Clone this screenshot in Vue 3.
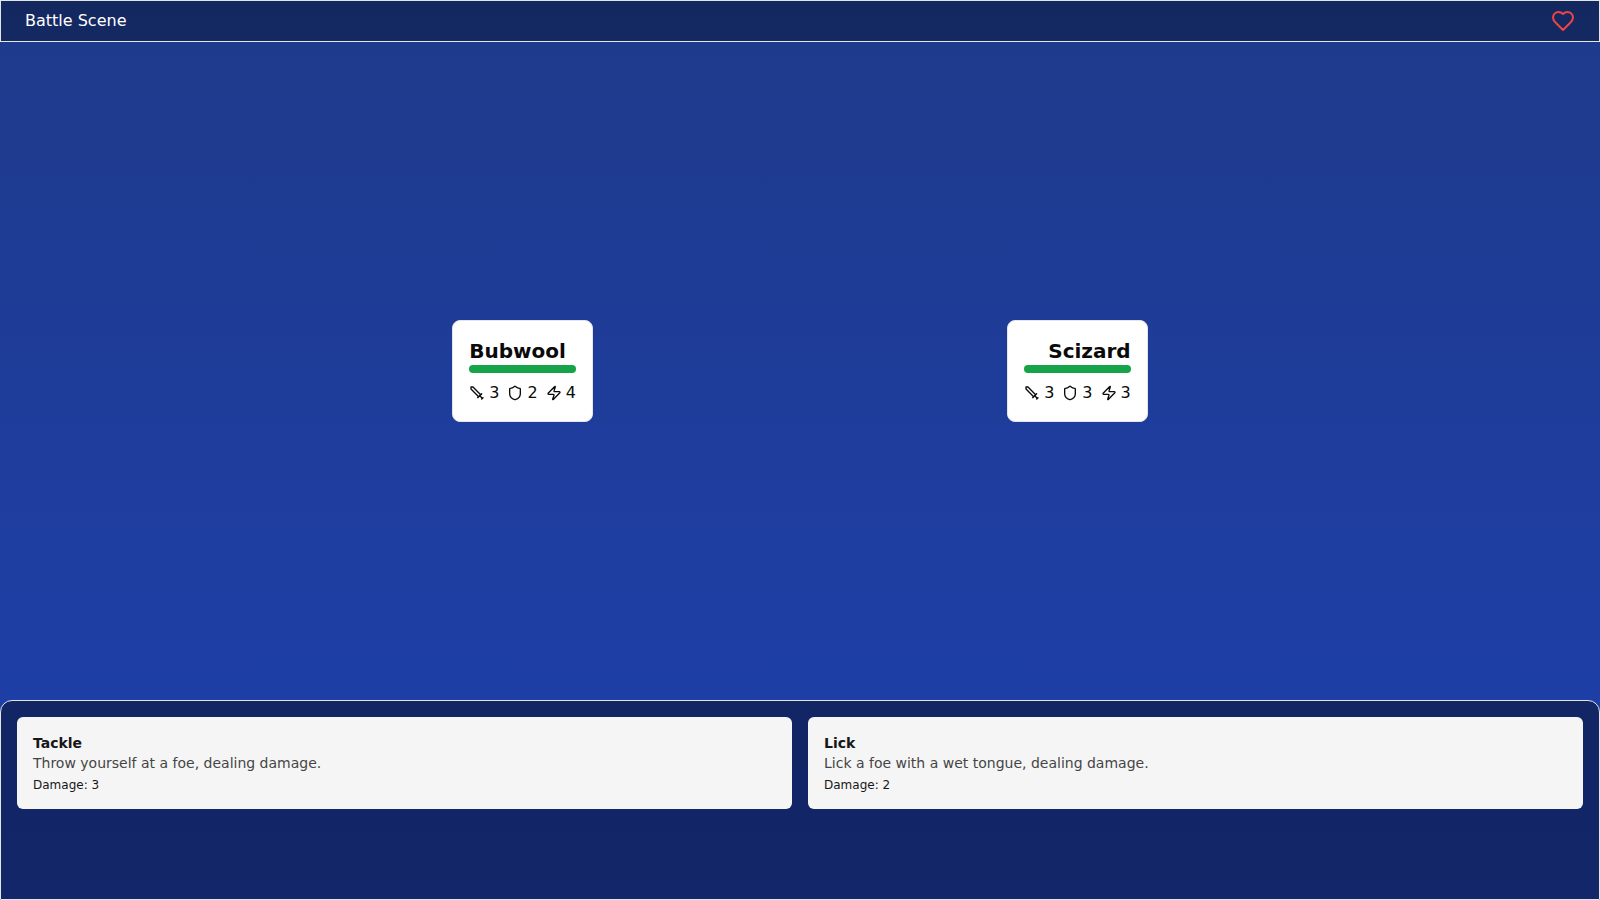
<script setup>
const creatures = [
  { name: 'Bubwool', side: 'player', hp: 100, attack: 3, defense: 2, speed: 4 },
  { name: 'Scizard', side: 'opponent', hp: 100, attack: 3, defense: 3, speed: 3 },
]

const skills = [
  { name: 'Tackle', description: 'Throw yourself at a foe, dealing damage.', damage: 3 },
  { name: 'Lick', description: 'Lick a foe with a wet tongue, dealing damage.', damage: 2 },
]
</script>

<template>
  <div class="scene">
    <header class="topbar">
      <span>Battle Scene</span>
      <svg class="heart" viewBox="0 0 24 24" aria-hidden="true">
        <path d="M19 14c1.49-1.46 3-3.21 3-5.5A5.5 5.5 0 0 0 16.5 3c-1.76 0-3 .5-4.5 2-1.5-1.5-2.74-2-4.5-2A5.5 5.5 0 0 0 2 8.5c0 2.3 1.5 4.05 3 5.5l7 7Z" />
      </svg>
    </header>

    <main class="arena">
      <section v-for="c in creatures" :key="c.name" class="creature" :class="c.side">
        <h2 class="name">{{ c.name }}</h2>
        <div class="health">
          <div class="health-fill" :style="{ width: c.hp + '%' }"></div>
        </div>
        <div class="stats">
          <span class="stat">
            <svg class="icon" viewBox="0 0 24 24" aria-hidden="true">
              <polyline points="14.5 17.5 3 6 3 3 6 3 17.5 14.5" />
              <line x1="13" x2="19" y1="19" y2="13" />
              <line x1="16" x2="20" y1="16" y2="20" />
              <line x1="19" x2="21" y1="21" y2="19" />
            </svg>
            <span>{{ c.attack }}</span>
          </span>
          <span class="stat">
            <svg class="icon" viewBox="0 0 24 24" aria-hidden="true">
              <path d="M20 13c0 5-3.5 7.5-7.66 8.95a1 1 0 0 1-.67-.01C7.5 20.5 4 18 4 13V6a1 1 0 0 1 1-1c2 0 4.5-1.2 6.24-2.72a1.17 1.17 0 0 1 1.52 0C14.51 3.81 17 5 19 5a1 1 0 0 1 1 1z" />
            </svg>
            <span>{{ c.defense }}</span>
          </span>
          <span class="stat">
            <svg class="icon" viewBox="0 0 24 24" aria-hidden="true">
              <path d="M4 14a1 1 0 0 1-.78-1.63l9.9-10.2a.5.5 0 0 1 .86.46l-1.92 6.02A1 1 0 0 0 13 10h7a1 1 0 0 1 .78 1.63l-9.9 10.2a.5.5 0 0 1-.86-.46l1.92-6.02A1 1 0 0 0 11 14z" />
            </svg>
            <span>{{ c.speed }}</span>
          </span>
        </div>
      </section>
    </main>

    <footer class="panel">
      <button v-for="s in skills" :key="s.name" type="button" class="skill">
        <span class="skill-name">{{ s.name }}</span>
        <span class="skill-text">{{ s.description }}</span>
        <span class="skill-damage">Damage: {{ s.damage }}</span>
      </button>
    </footer>
  </div>
</template>

<style>
body {
  margin: 0;
}
</style>

<style scoped>
.scene,
.scene * {
  box-sizing: border-box;
}

.scene {
  display: flex;
  flex-direction: column;
  min-height: 100vh;
  background: linear-gradient(to bottom, #1e3a8a, #1e40af);
  color: #0a0a0a;
  font-family: "DejaVu Sans", sans-serif;
  font-size: 16px;
  line-height: 24px;
}

.topbar {
  display: flex;
  align-items: center;
  justify-content: space-between;
  padding: 8px 24px;
  border: 1px solid #e5e5e5;
  background: rgba(0, 0, 0, 0.3);
  color: #fff;
}

.heart,
.icon {
  display: block;
  fill: none;
  stroke: currentColor;
  stroke-width: 2;
  stroke-linecap: round;
  stroke-linejoin: round;
}

.heart {
  width: 24px;
  height: 24px;
  color: #ef4444;
}

.icon {
  width: 16px;
  height: 16px;
}

.arena {
  flex: 1;
  display: flex;
  align-items: center;
  justify-content: space-evenly;
  padding: 0 38px;
}

.creature {
  padding: 16px;
  border: 1px solid #e5e5e5;
  border-radius: 8px;
  background: #fff;
}

.name {
  margin: 0;
  font-size: 20px;
  line-height: 28px;
  font-weight: 700;
}

.opponent .name {
  text-align: right;
}

.health {
  height: 8px;
  border-radius: 4px;
  background: #e5e5e5;
  overflow: hidden;
}

.health-fill {
  height: 100%;
  background: #16a34a;
}

.stats {
  display: flex;
  gap: 8px;
  margin-top: 8px;
}

.stat {
  display: flex;
  align-items: center;
  gap: 4px;
}

.panel {
  display: grid;
  grid-template-columns: 1fr 1fr;
  align-items: start;
  gap: 16px;
  min-height: 200px;
  padding: 16px;
  border: 1px solid #e5e5e5;
  border-radius: 12px 12px 0 0;
  background: rgba(0, 0, 0, 0.4);
}

.skill {
  display: flex;
  flex-direction: column;
  padding: 16px;
  border: 0;
  border-radius: 6px;
  background: #f5f5f5;
  color: #171717;
  font-family: inherit;
  font-size: 14px;
  line-height: 20px;
  text-align: left;
  cursor: pointer;
}

.skill-name {
  font-weight: 700;
}

.skill-text {
  color: #454545;
}

.skill-damage {
  margin-top: 4px;
  font-size: 12px;
  line-height: 16px;
}
</style>
